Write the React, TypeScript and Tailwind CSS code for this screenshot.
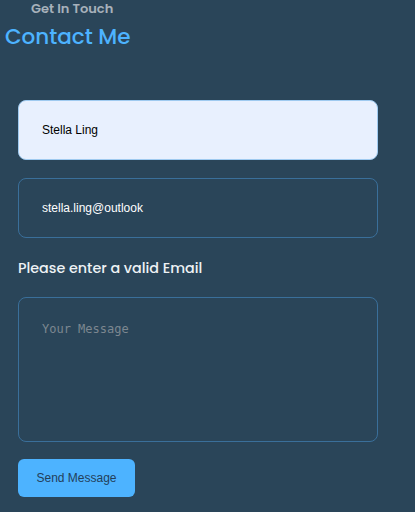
import { useState } from "react";

const App = () => {
  const [name, setName] = useState("Stella Ling");
  const [email, setEmail] = useState("stella.ling@outlook");
  const [message, setMessage] = useState("");

  return (
    <section className="w-full min-h-[512px] bg-[#2a4559] overflow-hidden">
      <div className="pl-[31px] pt-[1px] font-['Poppins',Inter,sans-serif] text-[13px] font-semibold leading-[16px] text-[#a7b1bb]">
        Get In Touch
      </div>
      <h1 className="pl-[5px] mt-[6px] font-['Poppins',Inter,sans-serif] text-[21.5px] leading-[28px] font-medium text-[#4db3ff]">
        Contact Me
      </h1>

      <form
        className="flex flex-col px-[18px] pt-[49px] w-[396px] font-['Liberation_Sans',Arial,sans-serif]"
        onSubmit={(e) => e.preventDefault()}
      >
        <input
          value={name}
          onChange={(e) => setName(e.target.value)}
          className="h-[60px] w-full rounded-lg border border-[#9fcaf0] bg-[#e8f0fe] px-[23px] text-[12px] text-black outline-none"
        />
        <input
          value={email}
          onChange={(e) => setEmail(e.target.value)}
          className="mt-[18px] h-[60px] w-full rounded-lg border border-[#3a6f9a] bg-transparent px-[23px] text-[12px] text-white outline-none"
        />
        <p className="mt-[20px] font-['Poppins',Inter,sans-serif] text-[14.3px] leading-[20px] font-medium text-[#eef2f5]">
          Please enter a valid Email
        </p>
        <textarea
          value={message}
          onChange={(e) => setMessage(e.target.value)}
          placeholder="Your Message"
          className="mt-[19px] h-[145px] w-full resize-none rounded-lg border border-[#3a6f9a] bg-transparent px-[23px] pt-[22px] font-['DejaVu_Sans_Mono',monospace] text-[12px] text-white outline-none placeholder:text-[#7c8790]"
        />
        <button
          type="submit"
          className="mt-[17px] h-[38px] w-[117px] rounded-md bg-[#4db3ff] text-[12px] text-[#23405a]"
        >
          Send Message
        </button>
      </form>
    </section>
  );
};

export default App;
